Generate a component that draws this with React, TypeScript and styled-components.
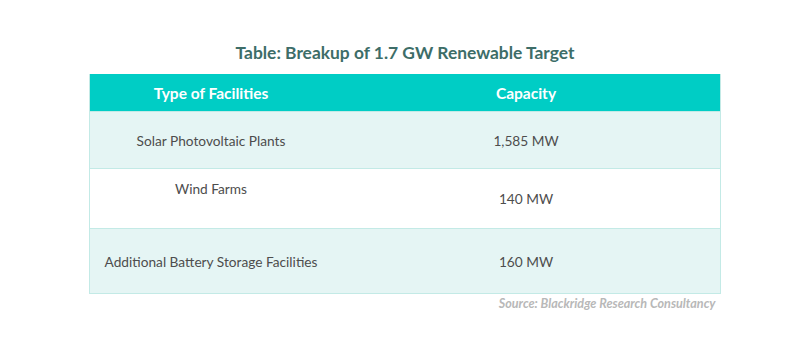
import { Fragment } from "react";
import styled, { createGlobalStyle } from "styled-components";

const GlobalStyle = createGlobalStyle`
  body {
    margin: 0;
    background: #ffffff;
    font-family: Lato, "Open Sans", sans-serif;
  }
`;

const Page = styled.div`
  width: 809px;
  height: 359px;
  padding-top: 42px;
  box-sizing: border-box;
  display: flex;
  flex-direction: column;
  align-items: center;
`;

const Title = styled.h2`
  margin: 0 0 11px;
  font-size: 17.4px;
  line-height: 21px;
  font-weight: 700;
  color: #3d6d68;
  transform: translateX(0.5px);
`;

const Table = styled.div`
  width: 632px;
  display: grid;
  grid-template-columns: 242px 1fr;
  border: 1px solid #c3eae6;
  border-top: none;
  box-sizing: border-box;
  margin-left: 1px;
`;

const HeaderCell = styled.div`
  height: 37px;
  background: #00cdc5;
  color: #ffffff;
  font-weight: 700;
  font-size: 15.5px;
  display: flex;
  align-items: center;
  justify-content: center;
`;

const Cell = styled.div<{ $tint: boolean; $height: number; $top?: boolean }>`
  height: ${(p) => p.$height}px;
  box-sizing: border-box;
  background: ${(p) => (p.$tint ? "#e5f5f4" : "#ffffff")};
  border-top: 1px solid #c3eae6;
  color: #4d4d4d;
  font-size: 13.7px;
  display: flex;
  justify-content: center;
  align-items: ${(p) => (p.$top ? "flex-start" : "center")};
  padding-top: ${(p) => (p.$top ? "11px" : "0")};
`;

const Source = styled.div`
  width: 632px;
  margin-top: 2px;
  padding-right: 5px;
  box-sizing: border-box;
  text-align: right;
  font-size: 12.6px;
  line-height: 15px;
  font-weight: 700;
  font-style: italic;
  color: #b8b8b8;
`;

const rows = [
  { name: "Solar Photovoltaic Plants", capacity: "1,585 MW", height: 57, tint: true },
  { name: "Wind Farms", capacity: "140 MW", height: 60, tint: false, top: true },
  { name: "Additional Battery Storage Facilities", capacity: "160 MW", height: 65, tint: true },
];

export default function App() {
  return (
    <>
      <GlobalStyle />
      <Page>
        <Title>Table: Breakup of 1.7 GW Renewable Target</Title>
        <Table>
          <HeaderCell>Type of Facilities</HeaderCell>
          <HeaderCell>Capacity</HeaderCell>
          {rows.map((r) => (
            <Fragment key={r.name}>
              <Cell $tint={r.tint} $height={r.height} $top={r.top}>
                {r.name}
              </Cell>
              <Cell $tint={r.tint} $height={r.height}>
                {r.capacity}
              </Cell>
            </Fragment>
          ))}
        </Table>
        <Source>Source: Blackridge Research Consultancy</Source>
      </Page>
    </>
  );
}
